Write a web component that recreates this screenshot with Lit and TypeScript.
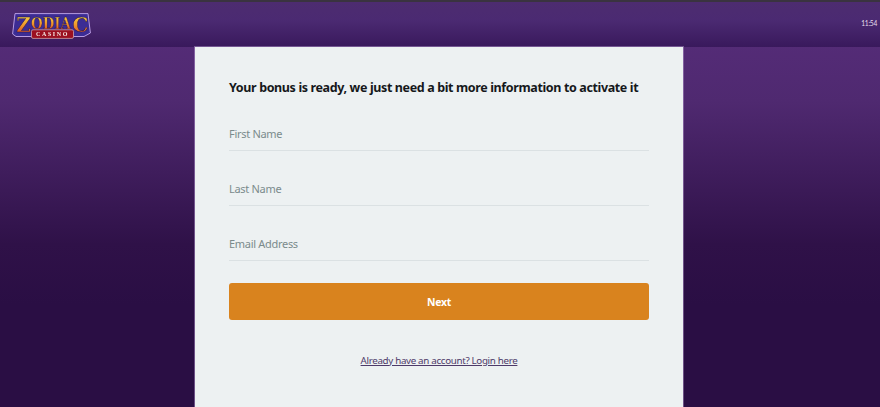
import { LitElement, html, css } from "lit";
import { customElement } from "lit/decorators.js";

@customElement("app-root")
export class AppRoot extends LitElement {
  static styles = css`
    :host {
      display: flex;
      flex-direction: column;
      height: 407px;
      overflow: hidden;
      font-family: "Noto Sans", sans-serif;
      background: linear-gradient(180deg, #4b2b6e 0%, #552c78 8%, #4f2970 25%, #2f1148 60%, #2a0e44 75%, #2a0e44 100%);
    }
    .top {
      height: 47px;
      flex: none;
      box-sizing: border-box;
      border-top: 2px solid #3a3340;
      background: linear-gradient(180deg, #4d2c70 0%, #4b2a72 40%, #39195c 100%);
      display: flex;
      align-items: center;
      justify-content: space-between;
      padding: 0 3px 0 12px;
    }
    .logo { display: block; width: 79px; height: 26px; margin-top: 3px; filter: blur(0.35px); }
    .time { font-family: "Lato", sans-serif; font-size: 6.6px; letter-spacing: -0.25px; color: #e6deed; margin-top: -4px; }
    .main { flex: 1; display: flex; justify-content: center; padding-right: 2px; }
    .card {
      width: 488px;
      box-sizing: border-box;
      background: #edf1f2;
      padding: 31px 34px 0;
      display: flex;
      flex-direction: column;
      box-shadow: 0 0 0 1px rgba(190, 165, 215, 0.45);
    }
    h1 {
      margin: 0;
      font-size: 12.5px;
      font-weight: 700;
      line-height: 20px;
      letter-spacing: -0.37px;
      color: #15181b;
      white-space: nowrap;
    }
    .field {
      height: 28px;
      border-bottom: 1px solid #dbe1e3;
      font-size: 11px;
      letter-spacing: -0.3px;
      line-height: 16px;
      color: #7b8b8c;
      padding-top: 3px;
      box-sizing: border-box;
      margin-top: 27px;
    }
    .field.first { margin-top: 25px; }
    .btn {
      margin-top: 22px;
      height: 37px;
      border-radius: 3px;
      background: #d9831e;
      color: #fff;
      font-size: 10.4px;
      letter-spacing: -0.2px;
      font-weight: 700;
      display: flex;
      align-items: center;
      justify-content: center;
    }
    .login {
      margin-top: 33px;
      text-align: center;
      font-size: 9.8px;
      letter-spacing: -0.33px;
      line-height: 16px;
      color: #4d3a69;
      text-decoration: underline;
    }
  `;

  render() {
    return html`
      <div class="top">
        <svg class="logo" viewBox="0 0 79 26">
          <defs>
            <linearGradient id="g" x1="0" y1="0" x2="0" y2="1">
              <stop offset="0" stop-color="#f8e94f" />
              <stop offset="0.5" stop-color="#f09a2c" />
              <stop offset="1" stop-color="#cf3326" />
            </linearGradient>
          </defs>
          <path d="M3 0.6 H76 L78.4 20 L72 23.5 H4 L0.6 21 Z" fill="#3c2c94" stroke="#b79be0" stroke-width="1" />
          <g font-family="DejaVu Serif, serif" font-weight="700" fill="url(#g)" stroke="#1c1048" stroke-width="0.4">
            <text x="11.5" y="18.5" text-anchor="middle" font-size="20">Z</text>
            <text x="39" y="15.6" text-anchor="middle" font-size="16" textLength="40" lengthAdjust="spacingAndGlyphs">ODIA</text>
            <text x="68.5" y="18.5" text-anchor="middle" font-size="20">C</text>
          </g>
          <rect x="19.5" y="16.8" width="42" height="8.6" rx="1.5" fill="#9b1020" stroke="#c9a0a8" stroke-width="0.8" />
          <text x="40.5" y="23.3" text-anchor="middle" font-family="Liberation Serif, serif" font-weight="700" font-size="6" letter-spacing="1.6" fill="#f5ebe6">CASINO</text>
        </svg>
        <div class="time">11:54</div>
      </div>
      <div class="main">
        <div class="card">
          <h1>Your bonus is ready, we just need a bit more information to activate it</h1>
          <div class="field first">First Name</div>
          <div class="field">Last Name</div>
          <div class="field">Email Address</div>
          <div class="btn">Next</div>
          <div class="login">Already have an account? Login here</div>
        </div>
      </div>
    `;
  }
}
